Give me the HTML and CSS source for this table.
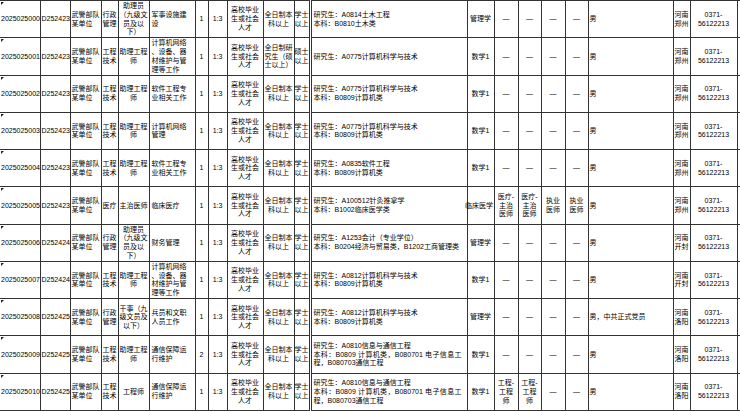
FILE: index.html
```html
<!DOCTYPE html>
<html lang="zh-CN">
<head>
<meta charset="utf-8">
<title>职位表</title>
<link rel="stylesheet" href="styles.css">
</head>
<body>
<table class="posts">
<colgroup>
<col><col><col><col><col><col><col><col><col><col><col><col><col><col><col><col><col><col><col><col><col>
</colgroup>
<tbody>
<tr>
<td>2025025000</td><td>D252423</td><td>武警部队某单位</td><td>行政管理</td><td>助理员（九级文员及以下）</td><td><span class="jl">军事设施建</span><span class="ln">设</span></td><td>1</td><td>1:3</td><td>高校毕业生或社会人才</td><td>全日制本科以上</td><td>学士以上</td><td>研究生：A0814土木工程<br>本科：B0810土木类</td><td>管理学</td><td>—</td><td>—</td><td>—</td><td>—</td><td>男</td><td>河南郑州</td><td>0371-56122213</td><td></td>
</tr>
<tr>
<td>2025025001</td><td>D252423</td><td>武警部队某单位</td><td>工程技术</td><td>助理工程师</td><td><span class="jl">计算机网络</span><span class="jl">、设备、器</span><span class="jl">材维护与管</span><span class="ln">理等工作</span></td><td>1</td><td>1:3</td><td>高校毕业生或社会人才</td><td>全日制研究生（硕士以上）</td><td>硕士以上</td><td>研究生：A0775计算机科学与技术</td><td>数学1</td><td>—</td><td>—</td><td>—</td><td>—</td><td>男</td><td>河南郑州</td><td>0371-56122213</td><td></td>
</tr>
<tr>
<td>2025025002</td><td>D252423</td><td>武警部队某单位</td><td>工程技术</td><td>助理工程师</td><td><span class="jl">软件工程专</span><span class="ln">业相关工作</span></td><td>1</td><td>1:3</td><td>高校毕业生或社会人才</td><td>全日制本科以上</td><td>学士以上</td><td>研究生：A0775计算机科学与技术<br>本科：B0809计算机类</td><td>数学1</td><td>—</td><td>—</td><td>—</td><td>—</td><td>男</td><td>河南郑州</td><td>0371-56122213</td><td></td>
</tr>
<tr>
<td>2025025003</td><td>D252423</td><td>武警部队某单位</td><td>工程技术</td><td>助理工程师</td><td><span class="jl">计算机网络</span><span class="ln">管理</span></td><td>1</td><td>1:3</td><td>高校毕业生或社会人才</td><td>全日制本科以上</td><td>学士以上</td><td>研究生：A0775计算机科学与技术<br>本科：B0809计算机类</td><td>数学1</td><td>—</td><td>—</td><td>—</td><td>—</td><td>男</td><td>河南郑州</td><td>0371-56122213</td><td></td>
</tr>
<tr>
<td>2025025004</td><td>D252423</td><td>武警部队某单位</td><td>工程技术</td><td>助理工程师</td><td><span class="jl">软件工程专</span><span class="ln">业相关工作</span></td><td>1</td><td>1:3</td><td>高校毕业生或社会人才</td><td>全日制本科以上</td><td>学士以上</td><td>研究生：A0835软件工程<br>本科：B0809计算机类</td><td>数学1</td><td>—</td><td>—</td><td>—</td><td>—</td><td>男</td><td>河南郑州</td><td>0371-56122213</td><td></td>
</tr>
<tr>
<td>2025025005</td><td>D252423</td><td>武警部队某单位</td><td>医疗</td><td>主治医师</td><td>临床医疗</td><td>1</td><td>1:3</td><td>高校毕业生或社会人才</td><td>全日制本科以上</td><td>学士以上</td><td>研究生：A100512针灸推拿学<br>本科：B1002临床医学类</td><td class="wide">临床医学</td><td>医疗-主治医师</td><td>医疗-主治医师</td><td>执业医师</td><td>执业医师</td><td>男</td><td>河南郑州</td><td>0371-56122213</td><td></td>
</tr>
<tr>
<td>2025025006</td><td>D252424</td><td>武警部队某单位</td><td>行政管理</td><td>助理员（九级文员及以下）</td><td>财务管理</td><td>1</td><td>1:3</td><td>高校毕业生或社会人才</td><td>全日制本科以上</td><td>学士以上</td><td>研究生：A1253会计（专业学位）<br>本科：B0204经济与贸易类，B1202工商管理类</td><td>管理学</td><td>—</td><td>—</td><td>—</td><td>—</td><td>男</td><td>河南开封</td><td>0371-56122213</td><td></td>
</tr>
<tr>
<td>2025025007</td><td>D252424</td><td>武警部队某单位</td><td>工程技术</td><td>助理工程师</td><td><span class="jl">计算机网络</span><span class="jl">、设备、器</span><span class="jl">材维护与管</span><span class="ln">理等工作</span></td><td>1</td><td>1:3</td><td>高校毕业生或社会人才</td><td>全日制本科以上</td><td>学士以上</td><td>研究生：A0812计算机科学与技术<br>本科：B0809计算机类</td><td>数学1</td><td>—</td><td>—</td><td>—</td><td>—</td><td>男</td><td>河南开封</td><td>0371-56122213</td><td></td>
</tr>
<tr>
<td>2025025008</td><td>D252425</td><td>武警部队某单位</td><td>行政管理</td><td>干事（九级文员及以下）</td><td><span class="jl">兵员和文职</span><span class="ln">人员工作</span></td><td>1</td><td>1:3</td><td>高校毕业生或社会人才</td><td>全日制本科以上</td><td>学士以上</td><td>研究生：A0812计算机科学与技术<br>本科：B0809计算机类</td><td>管理学</td><td>—</td><td>—</td><td>—</td><td>—</td><td>男，中共正式党员</td><td>河南洛阳</td><td>0371-56122213</td><td></td>
</tr>
<tr>
<td>2025025009</td><td>D252425</td><td>武警部队某单位</td><td>工程技术</td><td>助理工程师</td><td><span class="jl">通信保障运</span><span class="ln">行维护</span></td><td>2</td><td>1:3</td><td>高校毕业生或社会人才</td><td>全日制本科以上</td><td>学士以上</td><td><span class="ln">研究生：A0810信息与通信工程</span><span class="jl">本科：B0809 计算机类，B080701 电子信息工</span><span class="ln">程，B080703通信工程</span></td><td>数学1</td><td>—</td><td>—</td><td>—</td><td>—</td><td>男</td><td>河南洛阳</td><td>0371-56122213</td><td></td>
</tr>
<tr>
<td>2025025010</td><td>D252425</td><td>武警部队某单位</td><td>工程技术</td><td>工程师</td><td><span class="jl">通信保障运</span><span class="ln">行维护</span></td><td>1</td><td>1:3</td><td>高校毕业生或社会人才</td><td>全日制本科以上</td><td>学士以上</td><td><span class="ln">研究生：A0810信息与通信工程</span><span class="jl">本科：B0809 计算机类，B080701 电子信息工</span><span class="ln">程，B080703通信工程</span></td><td>数学1</td><td>工程-工程师</td><td>工程-工程师</td><td>—</td><td>—</td><td>男</td><td>河南洛阳</td><td>0371-56122213</td><td></td>
</tr>
</tbody>
</table>
</body>
</html>
```

FILE: styles.css
```css
html, body {
  margin: 0;
  padding: 0;
  background: #ffffff;
  overflow: hidden;
}

body {
  font-family: "Liberation Sans", "Noto Sans CJK SC", sans-serif;
  font-size: 7px;
  color: #000000;
}

.posts {
  border-collapse: collapse;
  table-layout: fixed;
  width: 740px;
}

.posts col:nth-child(1) { width: 40px; }
.posts col:nth-child(2) { width: 30px; }
.posts col:nth-child(3) { width: 31px; }
.posts col:nth-child(4) { width: 17px; }
.posts col:nth-child(5) { width: 31px; }
.posts col:nth-child(6) { width: 46px; }
.posts col:nth-child(7) { width: 13px; }
.posts col:nth-child(8) { width: 19px; }
.posts col:nth-child(9) { width: 36px; }
.posts col:nth-child(10) { width: 31px; }
.posts col:nth-child(11) { width: 16px; }
.posts col:nth-child(12) { width: 157px; }
.posts col:nth-child(13) { width: 27px; }
.posts col:nth-child(14) { width: 24px; }
.posts col:nth-child(15) { width: 23px; }
.posts col:nth-child(16) { width: 24px; }
.posts col:nth-child(17) { width: 23px; }
.posts col:nth-child(18) { width: 85px; }
.posts col:nth-child(19) { width: 17px; }
.posts col:nth-child(20) { width: 47px; }
.posts col:nth-child(21) { width: 3px; }

.posts tr {
  height: 37.27px;
}

.posts td {
  border: 1px solid #333333;
  padding: 1px 1px 0;
  vertical-align: middle;
  text-align: center;
  line-height: 8.8px;
  overflow: visible;
}

/* 一行：两端对齐铺满 */
.jl {
  display: block;
  text-align: justify;
  text-align-last: justify;
}

/* 一行：左对齐 */
.ln {
  display: block;
  text-align: left;
}

/* 报考职位代码 + 角标 */
.posts td:nth-child(1) {
  border-left: none;
  white-space: nowrap;
  position: relative;
}

.posts td:nth-child(1)::before {
  content: "";
  position: absolute;
  left: 1px;
  top: 1px;
  border-top: 3px solid #222222;
  border-right: 3px solid transparent;
}

.posts td:nth-child(2) { white-space: nowrap; }

.posts td:nth-child(3) { text-align: left; }

.posts td:nth-child(6) {
  text-align: left;
  padding: 1px 8px 0 2px;
}

.posts td:nth-child(11) {
  padding: 1px 0 0;
  border-right: 3px double #333333;
}

.posts td:nth-child(12) {
  text-align: left;
  padding: 1px 5px 0 2px;
}

.posts td:nth-child(13) { white-space: nowrap; }

.posts td.wide {
  padding: 1px 0 0;
  text-indent: -3px;
}

.posts td:nth-child(14),
.posts td:nth-child(15),
.posts td:nth-child(16),
.posts td:nth-child(17) {
  padding: 1px 2px 0;
}

.posts td:nth-child(18),
.posts td:nth-child(19) {
  text-align: left;
}

.posts td:nth-child(21) {
  border-right: none;
}
```
